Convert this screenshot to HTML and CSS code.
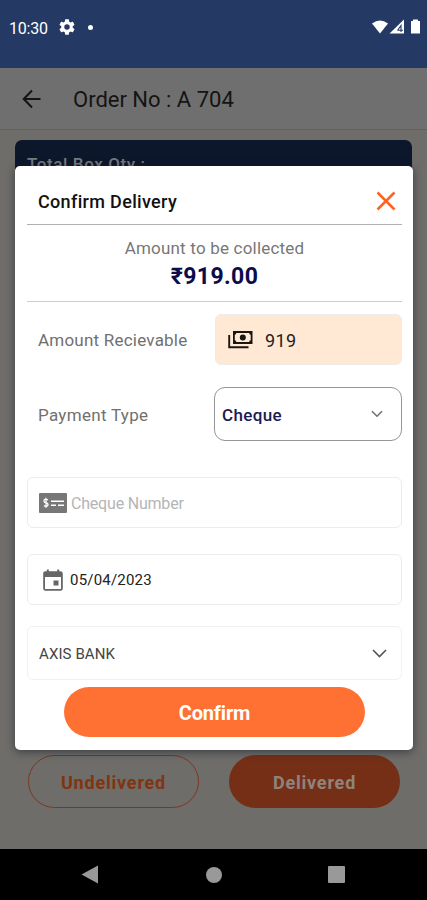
FILE: index.html
```html
<!DOCTYPE html>
<html lang="en">
<head>
<meta charset="utf-8">
<title>Confirm Delivery</title>
<link rel="stylesheet" href="styles.css">
</head>
<body>
<div class="screen">
  <header class="status">
    <span class="clock">10:30</span>
    <svg class="gear" width="16" height="16" viewBox="2 2 20 20"><path fill="#fff" d="M19.14 12.94c.04-.3.06-.61.06-.94 0-.32-.02-.64-.07-.94l2.03-1.58a.49.49 0 0 0 .12-.61l-1.92-3.32a.49.49 0 0 0-.59-.22l-2.39.96c-.5-.38-1.03-.7-1.62-.94l-.36-2.54a.48.48 0 0 0-.48-.41h-3.84c-.24 0-.43.17-.47.41l-.36 2.54c-.59.24-1.13.57-1.62.94l-2.39-.96a.48.48 0 0 0-.59.22L2.74 8.87c-.12.21-.08.47.12.61l2.03 1.58c-.05.3-.09.63-.09.94s.02.64.07.94l-2.03 1.58a.49.49 0 0 0-.12.61l1.92 3.32c.12.22.37.29.59.22l2.39-.96c.5.38 1.03.7 1.62.94l.36 2.54c.05.24.24.41.48.41h3.84c.24 0 .44-.17.47-.41l.36-2.54c.59-.24 1.13-.56 1.62-.94l2.39.96c.22.08.47 0 .59-.22l1.92-3.32a.48.48 0 0 0-.12-.61l-2.01-1.58zM12 15.4A3.4 3.4 0 1 1 12 8.6a3.4 3.4 0 0 1 0 6.8z"/></svg>
    <span class="dot"></span>
    <svg class="signals" width="50" height="16" viewBox="0 0 50 16">
      <path fill="#fff" d="M0 4.5Q8 -1.5 16 4.5L8 14.5Z"/>
      <path fill="#fff" d="M17.5 14.5L32 0.5V14.5Z"/>
      <path d="M25.5 11.5L29 6.5V13M25.5 11.2H31" fill="none" stroke="#243963" stroke-width="1.1"/>
      <path fill="#fff" d="M39 2h2V.5h5V2h2v12.5h-9z"/>
    </svg>
  </header>
  <div class="appbar">
    <svg width="20" height="20" viewBox="0 0 20 20" fill="none" stroke="#141414" stroke-width="2"><path d="M18.5 10H2M10 1.5L1.7 10L10 18.5"/></svg>
    <h1>Order No : A 704</h1>
  </div>
  <main class="page">
    <section class="order"><span>Total Box Qty :</span></section>
    <div class="actions">
      <button class="act outline">Undelivered</button>
      <button class="act solid">Delivered</button>
    </div>
  </main>
  <nav class="navbar">
    <svg width="18" height="19" viewBox="0 0 18 19"><path fill="#999" d="M17 0.5V18.5L0.5 9.5Z"/></svg>
    <span class="home"></span>
    <span class="recent"></span>
  </nav>

  <section class="dialog">
    <header class="dialog-head">
      <h2>Confirm Delivery</h2>
      <svg width="20" height="20" viewBox="0 0 20 20" stroke="#ff6320" stroke-width="2.5"><path d="M1.5 1.5L18.5 18.5M18.5 1.5L1.5 18.5"/></svg>
    </header>
    <div class="total">
      <span class="total-label">Amount to be collected</span>
      <strong>₹919.00</strong>
    </div>
    <div class="row amount">
      <label>Amount Recievable</label>
      <div class="cash">
        <svg width="25" height="19" viewBox="0 0 25 19"><path d="M1.2 5V17.3H20.5" fill="none" stroke="#1c1610" stroke-width="1.9"/><path fill="#1c1610" fill-rule="evenodd" d="M5 1H24.5V14H5ZM8.3 3Q8.3 4.6 6.8 4.8V10.2Q8.3 10.4 8.3 12H21.2Q21.2 10.4 22.7 10.2V4.8Q21.2 4.6 21.2 3Z"/><circle cx="14.8" cy="7.5" r="3" fill="#1c1610"/></svg>
        <span>919</span>
      </div>
    </div>
    <div class="row payment">
      <label>Payment Type</label>
      <div class="select">
        <span>Cheque</span>
        <svg width="12" height="8" viewBox="0 0 12 8" fill="none" stroke="#707070" stroke-width="1.6"><path d="M1 1.2L6 6.2L11 1.2"/></svg>
      </div>
    </div>
    <div class="field cheque">
      <svg width="28" height="20" viewBox="0 0 28 20"><rect width="28" height="20" rx="1" fill="#777"/><path d="M9 6.8Q5 5.5 5 8Q5 9.5 7 9.8Q9.2 10.2 9 11.8Q8.7 13.8 4.8 12.8M7 4.8V14.8" fill="none" stroke="#fff" stroke-width="1.3"/><path d="M12 8.3H25M12 12.3H17M19 12.3H25" stroke="#fff" stroke-width="1.5"/></svg>
      <span>Cheque Number</span>
    </div>
    <div class="field date">
      <svg width="20" height="22" viewBox="0 0 20 22"><path d="M1.1 4.5Q1.1 3.1 2.5 3.1H17.5Q18.9 3.1 18.9 4.5V19.5Q18.9 20.9 17.5 20.9H2.5Q1.1 20.9 1.1 19.5Z" fill="none" stroke="#666" stroke-width="1.8"/><path fill="#666" d="M1 3h18v5H1zM3.8.5h2V4h-2zM14.2.5h2V4h-2zM10.5 11.5h5v5h-5z"/></svg>
      <span>05/04/2023</span>
    </div>
    <div class="field bank">
      <span>AXIS BANK</span>
      <svg width="15" height="9" viewBox="0 0 15 9" fill="none" stroke="#555" stroke-width="1.6"><path d="M1 1L7.5 7.5L14 1"/></svg>
    </div>
    <button class="confirm">Confirm</button>
  </section>
</div>
</body>
</html>
```
FILE: styles.css
```css
* { box-sizing: border-box; }
body { margin: 0; font-family: Roboto, "Liberation Sans", sans-serif; }
svg { display: block; flex: none; }
h1, h2 { margin: 0; }
button { font-family: inherit; padding: 2px 0 0; border: 0; }
span, label, strong, h1, h2 { white-space: nowrap; }

.screen {
  position: relative;
  display: flex;
  flex-direction: column;
  width: 427px;
  height: 900px;
  overflow: hidden;
  background: #6e6d6a;
}

.status {
  display: flex;
  align-items: center;
  height: 68px;
  padding: 0 7px 14px 9px;
  background: #243963;
  color: #fff;
}
.clock { width: 50px; padding-top: 2px; font-size: 16px; letter-spacing: -0.2px; }
.dot { width: 5px; height: 5px; margin-left: 13px; border-radius: 50%; background: #fff; }
.signals { margin-left: auto; margin-right: -2px; }

.appbar {
  display: flex;
  align-items: center;
  gap: 31px;
  height: 62px;
  padding-left: 22px;
  border-bottom: 1px solid #62615f;
  background: #6f6f6f;
}
.appbar h1 { padding-top: 2px; color: #141414; font-size: 22px; font-weight: 400; }

.page {
  display: flex;
  flex: 1;
  flex-direction: column;
  padding: 10px 15px 41px;
}
.order {
  height: 120px;
  padding: 14px 12px;
  border-radius: 7px 7px 0 0;
  background: #0c172b;
  color: #777a80;
  font-size: 17px;
  font-weight: 500;
  letter-spacing: 0.6px;
}
.actions {
  display: flex;
  justify-content: space-between;
  margin-top: auto;
  padding: 0 12px 0 13px;
}
.act {
  width: 171px;
  height: 53px;
  border-radius: 27px;
  font-size: 18px;
  font-weight: 700;
  letter-spacing: 0.8px;
}
.outline { border: 1px solid #7e3523; background: transparent; color: #81340f; }
.solid { background: #752f17; color: #91837c; }

.navbar {
  display: flex;
  align-items: center;
  justify-content: space-between;
  height: 51px;
  padding: 0 82px 0 81px;
  background: #000;
}
.home { width: 16px; height: 16px; border-radius: 50%; background: #999; }
.recent { width: 17px; height: 17px; border-radius: 1px; background: #999; }

.dialog {
  position: absolute;
  top: 166px;
  left: 15px;
  display: flex;
  flex-direction: column;
  width: 398px;
  height: 584px;
  padding: 0 11px 0 12px;
  border-radius: 5px;
  background: #fff;
  box-shadow: 0 2px 8px rgba(25, 30, 42, 0.6);
}
.dialog-head {
  display: flex;
  align-items: center;
  justify-content: space-between;
  height: 59px;
  padding: 11px 6px 0 11px;
  border-bottom: 1px solid #b0b0b0;
}
.dialog-head h2 { padding-top: 2px; color: #111; font-size: 18px; font-weight: 500; letter-spacing: 0.33px; }
.total {
  display: flex;
  flex-direction: column;
  align-items: center;
  height: 77px;
  padding-top: 11px;
  border-bottom: 1px solid #ccc;
}
.total-label { color: #777; font-size: 17px; line-height: 24px; letter-spacing: 0.2px; }
.total strong { padding-top: 1px; color: #0c0c4a; font-size: 23px; line-height: 32px; letter-spacing: 0.4px; }

.row { display: flex; align-items: center; justify-content: space-between; }
.row label { padding: 1px 0 0 11px; color: #707070; font-size: 17px; letter-spacing: 0.22px; }
.amount { height: 51px; margin-top: 12px; }
.cash {
  display: flex;
  align-items: center;
  gap: 12px;
  width: 187px;
  height: 51px;
  padding-left: 12px;
  border: 1px solid #ececec;
  border-radius: 6px;
  background: #ffe9d5;
  color: #24201c;
  font-size: 18px;
  letter-spacing: 0.4px;
}
.cash span { padding-top: 1px; }
.payment { height: 54px; margin-top: 22px; }
.payment label { letter-spacing: 0.3px; }
.select {
  display: flex;
  align-items: center;
  justify-content: space-between;
  width: 188px;
  height: 54px;
  padding: 0 18px 0 7px;
  border: 1px solid #969696;
  border-radius: 11px;
  color: #1b1b52;
  font-size: 17px;
  font-weight: 500;
  letter-spacing: 0.35px;
}
.select span { padding-top: 1px; }

.field {
  display: flex;
  align-items: center;
  border: 1px solid #ececec;
  border-radius: 6px;
}
.field span { padding-top: 1px; }
.cheque {
  gap: 4px;
  height: 51px;
  margin-top: 36px;
  padding-left: 11px;
  color: #b5b5b5;
  font-size: 16px;
  letter-spacing: -0.2px;
}
.date {
  gap: 7px;
  height: 51px;
  margin-top: 26px;
  padding-left: 15px;
  color: #222;
  font-size: 15px;
  letter-spacing: 0.2px;
}
.bank {
  justify-content: space-between;
  height: 54px;
  margin-top: 21px;
  padding: 0 14px 0 11px;
  border-color: #f2f2f2;
  color: #444;
  font-size: 15px;
  letter-spacing: 0.1px;
}
.confirm {
  width: 301px;
  height: 50px;
  margin: 7px 0 0 37px;
  border-radius: 25px;
  background: #ff7033;
  color: #fff;
  font-size: 20px;
  font-weight: 700;
  letter-spacing: -0.2px;
}
```
